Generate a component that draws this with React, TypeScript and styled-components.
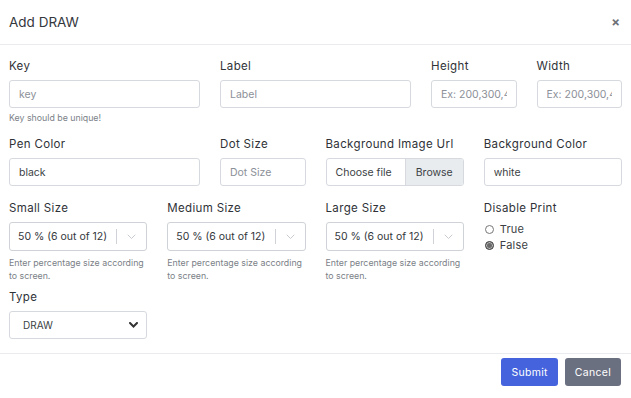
import React from "react";
import styled, { createGlobalStyle } from "styled-components";

const GlobalStyle = createGlobalStyle`
  html, body {
    margin: 0;
    padding: 0;
    background: #fff;
  }
  body {
    font-family: Inter, "Open Sans", "DejaVu Sans", sans-serif;
    color: #333;
  }
  * {
    box-sizing: border-box;
  }
`;

const Modal = styled.div`
  width: 631px;
  height: 398px;
  background: #fff;
`;

const Header = styled.div`
  height: 45px;
  padding: 0 9px;
  display: flex;
  align-items: center;
  justify-content: space-between;
  border-bottom: 1px solid #e9ebef;
`;

const Title = styled.h5`
  margin: 0;
  font-size: 13.5px;
  font-weight: 400;
  color: #34373d;
`;

const Close = styled.span`
  font-size: 13px;
  font-weight: 700;
  color: #6f7278;
  margin-right: 2px;
  line-height: 1;
`;

const Body = styled.div`
  padding: 13px 9px 14px;
  border-bottom: 1px solid #e9ebef;
`;

const Row = styled.div<{ $gap?: number }>`
  display: grid;
  grid-template-columns: repeat(12, 1fr);
  column-gap: 20px;
  margin-bottom: ${(p) => p.$gap ?? 0}px;
`;

const Col = styled.div<{ $span: number }>`
  grid-column: span ${(p) => p.$span};
  min-width: 0;
`;

const Label = styled.label`
  display: block;
  font-size: 11.5px;
  font-weight: 400;
  letter-spacing: 0.35px;
  color: #2f3237;
  line-height: 16px;
  margin-bottom: 6px;
  white-space: nowrap;
`;

const Input = styled.input`
  display: block;
  width: 100%;
  height: 28px;
  padding: 0 9px;
  border: 1px solid #d6d9de;
  border-radius: 3px;
  font-family: inherit;
  font-size: 10.5px;
  color: #3c3f45;
  background: #fff;
  outline: none;
  &::placeholder {
    color: #8c9098;
  }
`;

const Help = styled.div<{ $top?: number }>`
  font-size: 8.8px;
  line-height: 13px;
  color: #7b7f87;
  margin-top: ${(p) => p.$top ?? 3}px;
`;

const FileBox = styled.div`
  display: flex;
  height: 28px;
  border: 1px solid #d6d9de;
  border-radius: 3px;
  overflow: hidden;
  font-size: 10.5px;
  color: #3c3f45;
`;

const FileName = styled.span`
  flex: 1;
  display: flex;
  align-items: center;
  padding-left: 9px;
`;

const Browse = styled.span`
  display: flex;
  align-items: center;
  padding: 0 10px;
  background: #e9ecef;
  border-left: 1px solid #d6d9de;
`;

const SelectBox = styled.div`
  display: flex;
  align-items: center;
  height: 29px;
  border: 1px solid #cfd2d6;
  border-radius: 3px;
  padding-left: 8px;
  font-size: 10.5px;
  color: #33363b;
`;

const SelectValue = styled.span`
  flex: 1;
  white-space: nowrap;
`;

const Separator = styled.span`
  width: 1px;
  height: 15px;
  background: #cfd2d6;
`;

const Indicator = styled.span`
  width: 29px;
  display: flex;
  align-items: center;
  justify-content: center;
`;

const NativeSelect = styled.div`
  display: flex;
  align-items: center;
  justify-content: space-between;
  height: 28px;
  border: 1px solid #d6d9de;
  border-radius: 3px;
  padding: 0 8px 0 13px;
  font-size: 10px;
  color: #3c3f45;
`;

const RadioList = styled.div`
  display: flex;
  flex-direction: column;
  gap: 2px;
  padding-left: 1px;
  margin-top: 1px;
`;

const RadioItem = styled.label`
  display: flex;
  align-items: center;
  gap: 6px;
  font-size: 11px;
  letter-spacing: 0.2px;
  line-height: 14px;
  color: #3c3f45;
`;

const RadioDot = styled.span<{ $checked?: boolean }>`
  width: 9px;
  height: 9px;
  border-radius: 50%;
  border: 1px solid ${(p) => (p.$checked ? "#444" : "#777")};
  background: ${(p) => (p.$checked ? "#6a6a6a" : "#fff")};
  box-shadow: ${(p) => (p.$checked ? "inset 0 0 0 1px #bbb" : "none")};
`;

const Footer = styled.div`
  display: flex;
  justify-content: flex-end;
  gap: 7px;
  padding: 4px 10px 0;
`;

const Button = styled.button<{ $variant: "primary" | "secondary" }>`
  height: 28px;
  padding: 0 10px;
  border: none;
  border-radius: 3px;
  font-family: inherit;
  font-size: 10.5px;
  letter-spacing: 0.3px;
  color: #fff;
  background: ${(p) => (p.$variant === "primary" ? "#4563dc" : "#6b7081")};
`;

const Chevron = ({ bold }: { bold?: boolean }) => (
  <svg width="9" height="6" viewBox="0 0 9 6">
    <path
      d="M1 1 L4.5 4.5 L8 1"
      fill="none"
      stroke={bold ? "#333" : "#c8cbd0"}
      strokeWidth={bold ? 2 : 1}
      strokeLinecap="round"
    />
  </svg>
);

const SizeSelect = () => (
  <SelectBox>
    <SelectValue>50 % (6 out of 12)</SelectValue>
    <Separator />
    <Indicator>
      <Chevron />
    </Indicator>
  </SelectBox>
);

const sizeHelp = "Enter percentage size according to screen.";

export default function App() {
  return (
    <Modal>
      <GlobalStyle />
      <Header>
        <Title>Add DRAW</Title>
        <Close>×</Close>
      </Header>
      <Body>
        <Row $gap={12}>
          <Col $span={4}>
            <Label>Key</Label>
            <Input placeholder="key" />
            <Help>Key should be unique!</Help>
          </Col>
          <Col $span={4}>
            <Label>Label</Label>
            <Input placeholder="Label" />
          </Col>
          <Col $span={2}>
            <Label>Height</Label>
            <Input placeholder="Ex: 200,300,400" />
          </Col>
          <Col $span={2}>
            <Label>Width</Label>
            <Input placeholder="Ex: 200,300,400" />
          </Col>
        </Row>
        <Row $gap={14}>
          <Col $span={4}>
            <Label>Pen Color</Label>
            <Input defaultValue="black" />
          </Col>
          <Col $span={2}>
            <Label>Dot Size</Label>
            <Input placeholder="Dot Size" />
          </Col>
          <Col $span={3}>
            <Label>Background Image Url</Label>
            <FileBox>
              <FileName>Choose file</FileName>
              <Browse>Browse</Browse>
            </FileBox>
          </Col>
          <Col $span={3}>
            <Label>Background Color</Label>
            <Input defaultValue="white" />
          </Col>
        </Row>
        <Row $gap={7}>
          <Col $span={3}>
            <Label>Small Size</Label>
            <SizeSelect />
            <Help $top={5}>{sizeHelp}</Help>
          </Col>
          <Col $span={3}>
            <Label>Medium Size</Label>
            <SizeSelect />
            <Help $top={5}>{sizeHelp}</Help>
          </Col>
          <Col $span={3}>
            <Label>Large Size</Label>
            <SizeSelect />
            <Help $top={5}>{sizeHelp}</Help>
          </Col>
          <Col $span={3}>
            <Label>Disable Print</Label>
            <RadioList>
              <RadioItem>
                <RadioDot />
                True
              </RadioItem>
              <RadioItem>
                <RadioDot $checked />
                False
              </RadioItem>
            </RadioList>
          </Col>
        </Row>
        <Row>
          <Col $span={3}>
            <Label>Type</Label>
            <NativeSelect>
              DRAW
              <Chevron bold />
            </NativeSelect>
          </Col>
        </Row>
      </Body>
      <Footer>
        <Button $variant="primary">Submit</Button>
        <Button $variant="secondary">Cancel</Button>
      </Footer>
    </Modal>
  );
}
